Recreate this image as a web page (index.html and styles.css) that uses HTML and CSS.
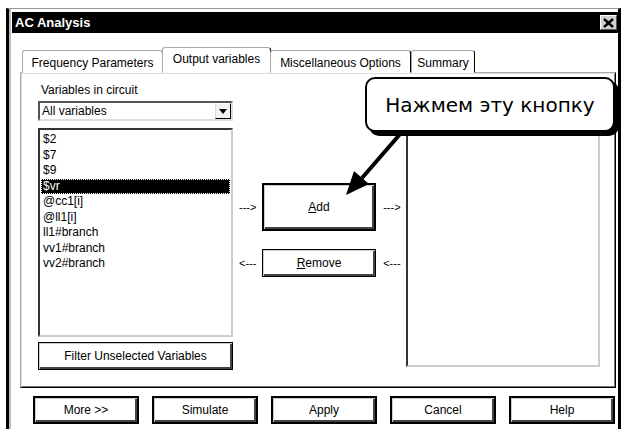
FILE: index.html
```html
<!DOCTYPE html>
<html lang="ru">
<head>
  <meta charset="UTF-8">
  <title>AC Analysis</title>
  <link rel="stylesheet" href="styles.css">
</head>
<body>
  <div class="window">
    <div class="titlebar">
      <span class="title">AC Analysis</span>
      <span class="close">
        <svg width="11" height="10" viewBox="0 0 11 10"><path d="M1 1 L10 9 M10 1 L1 9" stroke="#000" stroke-width="2.4"/></svg>
      </span>
    </div>

    <div class="dialog">
      <div class="tabs">
        <div class="tab tab-freq">Frequency Parameters</div>
        <div class="tab tab-out active">Output variables</div>
        <div class="tab tab-misc">Miscellaneous Options</div>
        <div class="tab tab-sum">Summary</div>
      </div>

      <div class="panel">
        <div class="col-left">
          <div class="label">Variables in circuit</div>
          <div class="combo">
            <span class="combo-text">All variables</span>
            <span class="drop"><span class="tri"></span></span>
          </div>
          <ul class="list">
            <li>$2</li>
            <li>$7</li>
            <li>$9</li>
            <li class="selected">$vr</li>
            <li>@cc1[i]</li>
            <li>@ll1[i]</li>
            <li>ll1#branch</li>
            <li>vv1#branch</li>
            <li>vv2#branch</li>
          </ul>
          <div class="btn filter">Filter Unselected Variables</div>
        </div>

        <div class="col-mid">
          <div class="move-row">
            <span class="arr">---&gt;</span>
            <div class="btn btn-default add"><u>A</u>dd</div>
            <span class="arr arr-r">---&gt;</span>
          </div>
          <div class="move-row remove-row">
            <span class="arr">&lt;---</span>
            <div class="btn remove"><u>R</u>emove</div>
            <span class="arr arr-r">&lt;---</span>
          </div>
        </div>

        <div class="list list-right"></div>
      </div>

      <div class="actions">
        <div class="btn act">More &gt;&gt;</div>
        <div class="btn act">Simulate</div>
        <div class="btn act">Apply</div>
        <div class="btn act">Cancel</div>
        <div class="btn act">Help</div>
      </div>
    </div>
  </div>

  <!-- подсказка поверх окна -->
  <div class="callout">Нажмем эту кнопку</div>
  <svg class="pointer" width="621" height="429" viewBox="0 0 621 429">
    <line x1="401" y1="133" x2="362" y2="178" stroke="#000" stroke-width="4"/>
    <polygon points="346,195 354,171 369,184" fill="#000"/>
  </svg>
</body>
</html>
```

FILE: styles.css
```css
body {
  margin: 0;
  background: #fff;
  font-family: 'Liberation Sans', Arial, sans-serif;
  font-size: 12px;
  color: #000;
  position: relative;
  width: 621px;
  height: 429px;
  overflow: hidden;
}
.window {
  margin: 8px 0 0 6px;
  width: 615px;
  height: 421px;
  box-sizing: border-box;
  border-style: solid;
  border-color: #999 #000 #000 #000;
  border-width: 1px 3px 0 3px;
  padding: 3px 0 0 3px;
  box-shadow: inset 2px 0 0 #bbb;
}
.titlebar {
  height: 21px;
  background: #000;
  color: #fff;
  display: flex;
  align-items: center;
  justify-content: space-between;
  padding: 0 1px 0 3px;
}
.title {
  font-weight: bold;
  font-size: 13px;
}
.close {
  width: 17px;
  height: 15px;
  box-sizing: border-box;
  background: #d0d0d0;
  border: 1px solid;
  border-color: #fff #555 #555 #fff;
  display: flex;
  align-items: center;
  justify-content: center;
}
.dialog {
  padding: 14px 2px 0 8px;
}

/* onglets */
.tabs {
  display: flex;
  align-items: flex-end;
  height: 26px;
  margin-left: 2px;
  margin-bottom: -1px;
  position: relative;
  z-index: 1;
}
.tab {
  height: 23px;
  box-sizing: border-box;
  border: 1px solid;
  border-color: #aaa #000 #fff #aaa;
  border-radius: 3px 3px 0 0;
  background: #fff;
  padding-top: 5px;
  text-align: center;
}
.tab-freq { width: 141px; }
.tab-out { width: 109px; }
.tab-misc { width: 141px; }
.tab-sum { width: 64px; }
.tab.active {
  height: 26px;
  padding-top: 4px;
  border-bottom-color: #fff;
  margin: 0 -1px;
}

.panel {
  height: 316px;
  box-sizing: border-box;
  border: 1px solid;
  border-color: #aaa #000 #000 #aaa;
  box-shadow: inset 1px 1px 0 #ddd, inset -1px -1px 0 #777;
  padding: 10px 0 0 17px;
  display: flex;
}
.col-left {
  width: 195px;
  display: flex;
  flex-direction: column;
}
.label {
  line-height: 14px;
  padding-left: 3px;
}
.combo {
  margin-top: 4px;
  height: 20px;
  box-sizing: border-box;
  border: 2px solid;
  border-color: #555 #ddd #ddd #555;
  display: flex;
  align-items: center;
  justify-content: space-between;
  padding-left: 2px;
}
.drop {
  width: 16px;
  height: 16px;
  box-sizing: border-box;
  border: 1px solid;
  border-color: #fff #000 #000 #ddd;
  background: #f2f2f2;
  display: flex;
  align-items: center;
  justify-content: center;
}
.tri {
  width: 0;
  height: 0;
  border-left: 4px solid transparent;
  border-right: 4px solid transparent;
  border-top: 5px solid #000;
}
.list {
  list-style: none;
  margin: 7px 0 0;
  padding: 2px 1px 0;
  height: 209px;
  box-sizing: border-box;
  border: 2px solid;
  border-color: #333 #ccc #ccc #333;
}
.list li {
  line-height: 15.5px;
  height: 15.5px;
  padding-left: 2px;
}
.list li.selected {
  background: #000;
  color: #fff;
  outline: 1px dotted #fff;
  outline-offset: -1px;
}

.btn {
  box-sizing: border-box;
  border: 1px solid #000;
  box-shadow: inset 1px 1px 0 #ccc, inset -2px -2px 0 #444;
  background: #fff;
  display: flex;
  align-items: center;
  justify-content: center;
}
.filter {
  margin-top: 5px;
  height: 28px;
}

.col-mid {
  width: 173px;
  padding-top: 100px;
}
.move-row {
  display: flex;
  align-items: center;
  padding-left: 6px;
}
.arr {
  width: 23px;
  font-size: 11px;
}
.arr-r {
  margin-left: 7px;
}
.add {
  width: 115px;
  height: 48px;
}
.btn-default {
  border-width: 2px;
}
.remove-row {
  margin-top: 18px;
}
.remove {
  width: 115px;
  height: 28px;
}
.list-right {
  width: 194px;
  height: 268px;
  margin-top: 16px;
}

.actions {
  display: flex;
  gap: 13px;
  padding-left: 13px;
  margin-top: 8px;
}
.act {
  width: 106px;
  height: 28px;
  border-width: 2px;
}

.callout {
  position: absolute;
  left: 365px;
  top: 77px;
  width: 250px;
  height: 55px;
  box-sizing: border-box;
  border: 2px solid #000;
  border-radius: 10px;
  background: #fff;
  box-shadow: 4px 4px 0 #000;
  font-family: 'DejaVu Sans', sans-serif;
  font-size: 20px;
  display: flex;
  align-items: center;
  justify-content: center;
  z-index: 5;
}
.pointer {
  position: absolute;
  left: 0;
  top: 0;
  z-index: 6;
}
```
